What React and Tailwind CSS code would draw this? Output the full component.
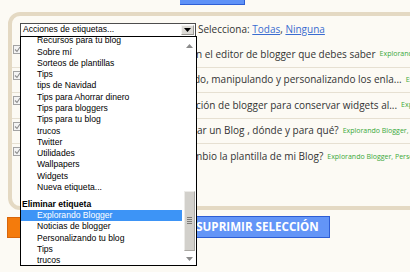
import React from 'react'

const rows = [
  { pre: 'Atajos de teclado e', text: 'n el editor de blogger que debes saber', w: 'w-[172px]', tags: 'Explorando Blogger' },
  { pre: 'Entendien', text: 'do, manipulando y personalizando los enla...', w: 'w-[170px]', tags: 'Explorando Blogger' },
  { pre: 'Configura', text: 'ción de blogger para conservar widgets al...', w: 'w-[172px]', tags: 'Explorando Blogger' },
  { pre: '¿Cómo y por qué cre', text: 'ar un Blog , dónde y para qué?', w: 'w-[173px]', tags: 'Explorando Blogger, Personalizando tu blog' },
  { pre: '¿Por qué ca', text: 'mbio la plantilla de mi Blog?', w: 'w-[169px]', tags: 'Explorando Blogger, Personalizando tu blog' },
]

const firstGroup = [
  'Recursos para tu blog',
  'Sobre mí',
  'Sorteos de plantillas',
  'Tips',
  'tips de Navidad',
  'Tips para Ahorrar dinero',
  'Tips para bloggers',
  'Tips para tu blog',
  'trucos',
  'Twitter',
  'Utilidades',
  'Wallpapers',
  'Widgets',
  'Nueva etiqueta...',
]

const removeGroup = ['Explorando Blogger', 'Noticias de blogger', 'Personalizando tu blog', 'Tips', 'trucos']

function Checkbox() {
  return (
    <div className="w-[9px] h-[9px] border border-[#a3a3a3] bg-[#f4f4f4] flex items-center justify-center shrink-0">
      <svg width="7" height="7" viewBox="0 0 7 7">
        <path d="M1 3.5 L3 5.5 L6 1" stroke="#8d8d8d" strokeWidth="1.1" fill="none" />
      </svg>
    </div>
  )
}

function Dropdown() {
  return (
    <div className="absolute left-0 top-[13px] w-[177px] h-[230px] bg-white border border-black overflow-hidden z-10 font-['Liberation_Sans',sans-serif] text-[8.6px] text-black">
      <div className="w-[161px] -mt-[1.3px]">
        {firstGroup.map((t, i) => (
          <div key={i} className="h-[11.3px] leading-[11.3px] pl-[16px] whitespace-nowrap">{t}</div>
        ))}
        <div className="h-[5.3px]" />
        <div className="h-[11.3px] leading-[11.3px] pl-[1px] font-bold">Eliminar etiqueta</div>
        {removeGroup.map((t, i) => (
          <div
            key={i}
            className={
              i === 0
                ? 'h-[11.3px] leading-[11.3px] pl-[16px] whitespace-nowrap bg-[#3d94f6] text-white'
                : 'h-[11.3px] leading-[11.3px] pl-[16px] whitespace-nowrap'
            }
          >
            {t}
          </div>
        ))}
      </div>
      {/* scrollbar */}
      <div className="absolute right-0 top-0 bottom-0 w-[14px] flex flex-col items-center">
        <svg width="7" height="4" viewBox="0 0 7 4" className="mt-[7px]">
          <path d="M0 4 L3.5 0 L7 4 Z" fill="#8a8a8a" />
        </svg>
        <div className="mt-[143px] w-[11px] h-[60px] bg-[#d2d0cb] border border-[#ecebe8] border-r-[#a9a7a2] border-b-[#a9a7a2] flex flex-col items-center justify-center gap-[1px]">
          <div className="w-[5px] h-[1px] bg-[#7d7b77]" />
          <div className="w-[5px] h-[1px] bg-[#7d7b77]" />
          <div className="w-[5px] h-[1px] bg-[#7d7b77]" />
          <div className="w-[5px] h-[1px] bg-[#7d7b77]" />
        </div>
        <svg width="7" height="4" viewBox="0 0 7 4" className="mt-[6px]">
          <path d="M0 0 L3.5 4 L7 0 Z" fill="#8a8a8a" />
        </svg>
      </div>
    </div>
  )
}

export default function App() {
  return (
    <div className="w-[410px] h-[272px] overflow-hidden relative bg-[#fcfaf4] font-['Open_Sans',sans-serif] text-[#333]">
      <div className="ml-[180px] w-[65px] h-[5px] bg-[#5f92f7] border-r border-b border-[#2e5fd6]" />

      <div className="mt-[7px] ml-[8px] w-[430px] h-[198px] border-4 border-[#e4d9c3] rounded-[12px] bg-[#fcfaf4]">
        <div className="flex items-center pl-[8px] pt-[6px]">
          <div className="relative">
            <div className="w-[176px] h-[14px] border border-[#4d4d4d] bg-white flex items-center justify-between pl-[2px] pr-[1px] font-['Liberation_Sans',sans-serif] text-[8.6px] text-black">
              <span>Acciones de etiquetas...</span>
              <div className="w-[13px] h-[10px] bg-[#dcdad5] border border-[#f4f4f2] border-r-[#9c9a95] border-b-[#9c9a95] flex items-center justify-center">
                <svg width="7" height="4" viewBox="0 0 7 4">
                  <path d="M0 0 L3.5 4 L7 0 Z" fill="#000" />
                </svg>
              </div>
            </div>
            <Dropdown />
          </div>
          <div className="ml-[2px] text-[10px] whitespace-nowrap">
            Selecciona: <a className="text-[#3a6cd0] underline">Todas</a>, <a className="text-[#3a6cd0] underline">Ninguna</a>
          </div>
        </div>

        <div className="mt-[5px]">
          {rows.map((r, i) => (
            <div key={i} className={i < 4 ? 'flex h-[25.5px] border-b border-[#e6e0d2]' : 'flex h-[25.5px]'}>
              <div className="ml-[1px] mt-[3px]">
                <Checkbox />
              </div>
              <div className="ml-[2px] flex items-center whitespace-nowrap text-[10px]">
                <span className={r.w + ' inline-block overflow-hidden text-right shrink-0'}>{r.pre}</span>
                <span>{r.text}</span>
                <span className="ml-[4px] text-[7px] text-[#3aa83a]">{r.tags}</span>
              </div>
            </div>
          ))}
        </div>
      </div>

      <div className="mt-[6px] flex items-center">
        <div className="ml-[7px] w-[176px] h-[21px] bg-[#f47b0c] border border-[#d8650a] text-white text-[11px] font-bold flex items-center justify-center">
          PUBLICAR
        </div>
        <div className="ml-[2px] w-[145px] h-[22px] bg-[#6395f7] border border-[#2d5dd4] text-white text-[11.6px] font-bold flex items-center justify-center whitespace-nowrap">
          SUPRIMIR SELECCIÓN
        </div>
      </div>

      <svg className="absolute left-[98px] top-[166px]" width="36" height="50" viewBox="0 0 36 50">
        <path d="M17 3 L18 42" stroke="#f25a1c" strokeWidth="6" strokeLinecap="round" fill="none" />
        <path d="M4 27 L18 44 L32 27" stroke="#f25a1c" strokeWidth="6" strokeLinecap="round" strokeLinejoin="round" fill="none" />
      </svg>
    </div>
  )
}
